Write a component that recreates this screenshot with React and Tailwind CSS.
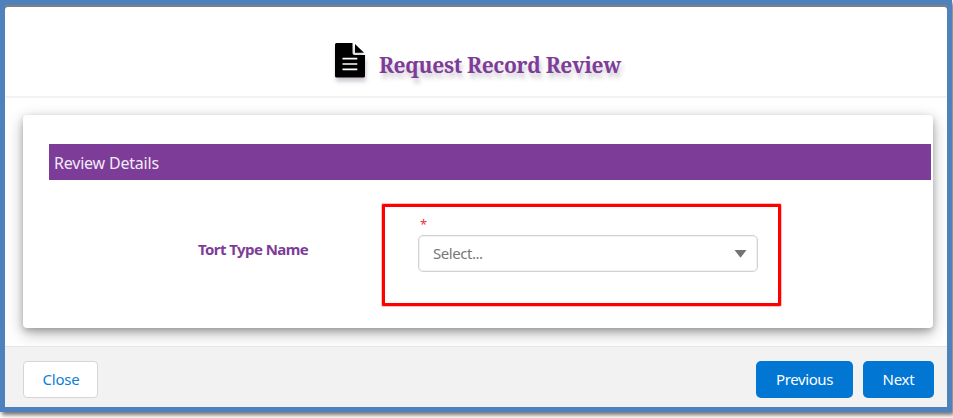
function DocumentIcon() {
  return (
    <svg
      className="h-[35px] w-[31px] shrink-0 overflow-visible drop-shadow-[1px_4px_2px_rgba(80,50,90,0.28)]"
      viewBox="0 0 31 35"
      aria-hidden="true"
    >
      <path fill="#000" d="M1.5 0H17.5V10Q17.5 12 19.5 12H30V33Q30 34.500 28.500 34.500H1.500Q0 34.500 0 33V1.500Q0 0 1.500 0Z" />
      <path fill="#000" d="M20 1L29 9.800H20Z" />
      <path stroke="#fff" strokeWidth="1.700" d="M7.500 15.700H22.300M7.500 21H22.300M7.500 26.400H22.300" />
    </svg>
  );
}

function Header() {
  return (
    <header className="flex h-[91px] shrink-0 border-b-2 border-[#f3f3f3] pt-[36px] pl-[330px]">
      <DocumentIcon />
      <h1 className="mt-[7px] ml-[13px] h-[30px] whitespace-nowrap font-['Noto_Serif','DejaVu_Serif_Condensed','DejaVu_Serif',serif] text-[21px] leading-[30px] font-bold tracking-[-0.33px] text-[#7d3c98] [font-stretch:condensed] [text-shadow:2px_5px_4px_rgba(70,50,80,0.25)]">
        Request Record Review
      </h1>
    </header>
  );
}

function TortTypeField() {
  return (
    <div className="mt-6 flex">
      <label className="mt-[34px] ml-[149px] w-[184px] shrink-0 text-[15px] leading-[22px] font-bold tracking-[-0.57px] text-[#7d3c98]">
        Tort Type Name
      </label>
      <div className="h-[102px] w-[399px] rounded-[1px] border-[3px] border-[#fe0000] pt-[8px] pl-[33px] shadow-[0_0_0_1px_rgba(254,0,0,0.25)]">
        <div className="h-[20px] pl-[2px] text-[13px] leading-[18px] text-[#ee3040]">*</div>
        <button className="flex h-[37px] w-[340px] items-center justify-between rounded-[5px] border border-[#d2d2d2] bg-white pr-[10px] pl-[14px] text-[15px] tracking-[-0.45px] text-[#777] shadow-[inset_0_0_0_1px_#f2f2f2]">
          <span>Select...</span>
          <svg className="h-[9px] w-[13px]" viewBox="0 0 13 9" aria-hidden="true">
            <path fill="#747474" d="M.5 1H12.500L6.500 8.800Z" />
          </svg>
        </button>
      </div>
    </div>
  );
}

export default function App() {
  return (
    <div className="h-[418px] w-[953px] overflow-hidden bg-white font-['Noto_Sans',sans-serif]">
      <div className="flex h-[412px] w-[952px] flex-col border-[5px] border-[#4f81bd] bg-[#808080] pt-[2px] shadow-[2px_3px_4px_rgba(0,0,0,0.55)]">
        <div className="flex min-h-0 flex-1 flex-col overflow-hidden rounded-t-[3px] bg-white">
          <Header />
          <main className="h-[248px] shrink-0 overflow-hidden pt-[17px] pl-[18px]">
            <section className="h-[213px] w-[910px] rounded-[4px] bg-white pt-[29px] pl-[26px] shadow-[0_3px_6px_rgba(0,0,0,0.2),0_5px_16px_rgba(0,0,0,0.3)]">
              <h2 className="h-[36px] w-[882px] bg-[#7d3c98] pl-[5px] text-[16px] leading-[39px] tracking-[-0.2px] text-[#f3eaf7]">
                Review Details
              </h2>
              <TortTypeField />
            </section>
          </main>
          <footer className="flex flex-1 items-start border-t border-[#e5e5e5] bg-[#f2f2f2] pt-[14px] pr-[13px] pl-[18px] text-[15px] tracking-[-0.25px]">
            <button className="h-[37px] w-[75px] rounded-[4px] border border-[#d6d6d6] bg-white pl-[1px] text-[#0b7dda]">
              Close
            </button>
            <button className="ml-auto h-[37px] w-[97px] rounded-[5px] bg-[#0176d3] tracking-[-0.4px] text-white">Previous</button>
            <button className="ml-[10px] h-[37px] w-[71px] rounded-[5px] bg-[#0176d3] text-white">Next</button>
          </footer>
        </div>
      </div>
    </div>
  );
}
